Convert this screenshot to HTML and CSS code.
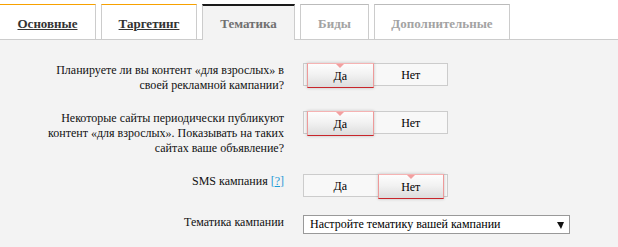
FILE: index.html
```html
<!DOCTYPE html>
<html>
<head>
<meta charset="utf-8">
<title>Кампания</title>
<link rel="stylesheet" href="styles.css">
</head>
<body>
<div class="page">
  <ul class="tabs">
    <li class="tab tab-link tab-w1"><a href="#">Основные</a></li>
    <li class="tab tab-link tab-w2"><a href="#">Таргетинг</a></li>
    <li class="tab tab-active tab-w3"><span>Тематика</span></li>
    <li class="tab tab-off tab-w4"><span>Биды</span></li>
    <li class="tab tab-off tab-w5"><span>Дополнительные</span></li>
  </ul>
  <div class="panel">
    <div class="form">
      <div class="label">Планируете ли вы контент «для взрослых» в своей рекламной кампании?</div>
      <div class="toggle">
        <span class="seg seg-active">Да</span>
        <span class="seg">Нет</span>
      </div>

      <div class="label">Некоторые сайты периодически публикуют контент «для взрослых». Показывать на таких сайтах ваше объявление?</div>
      <div class="toggle">
        <span class="seg seg-active">Да</span>
        <span class="seg">Нет</span>
      </div>

      <div class="label">SMS кампания <span class="help">[<a href="#">?</a>]</span></div>
      <div class="toggle">
        <span class="seg">Да</span>
        <span class="seg seg-active">Нет</span>
      </div>

      <div class="label">Тематика кампании</div>
      <div class="select">
        <span class="select-text">Настройте тематику вашей кампании</span>
        <span class="select-arrow"></span>
      </div>
    </div>
  </div>
</div>
</body>
</html>
```
FILE: styles.css
```css
html, body {
  margin: 0;
  padding: 0;
  background: #ffffff;
}

body {
  font-family: "Liberation Serif", "Times New Roman", serif;
  font-size: 12px;
  color: #111111;
  overflow: hidden;
}

.page {
  width: 618px;
  height: 247px;
  overflow: hidden;
}

.tabs {
  list-style: none;
  margin: 0 0 0 -1px;
  padding: 4px 0 0 0;
  display: flex;
  gap: 5px;
  border-bottom: 1px solid #cccccc;
}

.tab {
  box-sizing: border-box;
  height: 35px;
  border: 1px solid #cccccc;
  border-bottom: 0;
  background: #ffffff;
  text-align: center;
  font-size: 13px;
  font-weight: bold;
  line-height: 15px;
  padding-top: 11px;
}

.tab-link {
  border-top: 1px solid #f7a100;
}

.tab-link a {
  color: #333333;
  text-decoration: underline;
}

.tab-active {
  height: 36px;
  margin-bottom: -1px;
  border-top: 2px solid #1a1a1a;
  padding-top: 10px;
  background: #f3f3f3;
  color: #707070;
}

.tab-off {
  border-top: 1px solid #bbbbbb;
  color: #a3a3a3;
}

.tab-w1 { width: 97px; }
.tab-w2 { width: 96px; }
.tab-w3 { width: 93px; }
.tab-w4 { width: 69px; }
.tab-w5 { width: 136px; }

.panel {
  box-sizing: border-box;
  min-height: 207px;
  background: #f3f3f3;
  padding: 23px 0 0 34px;
}

.form {
  display: grid;
  grid-template-columns: 250px auto;
  column-gap: 19px;
  row-gap: 18px;
  align-items: start;
  justify-items: start;
}

.label {
  justify-self: stretch;
  text-align: right;
  line-height: 15px;
  color: #111111;
}

.help {
  color: #1d9ad6;
}

.help a {
  color: #1d9ad6;
  text-decoration: underline;
}

.toggle {
  box-sizing: border-box;
  width: 145px;
  height: 23px;
  border: 1px solid #cccccc;
  background: #f8f8f8;
  padding: 0 1px;
  display: grid;
  grid-template-columns: 1fr 1fr;
}

.seg {
  display: flex;
  align-items: center;
  justify-content: center;
  line-height: 15px;
  padding-top: 1px;
  color: #000000;
}

.seg-active {
  position: relative;
  margin: -1px 2px -3px;
  border: 1px solid #ee9a9a;
  border-top-color: #f5b3b3;
  border-bottom-color: #c8262c;
  background: linear-gradient(#fdfdfd 0%, #f2f2f2 45%, #dddddd 100%);
  box-shadow: 0 0 3px rgba(0, 0, 0, 0.22);
}

.seg-active::after {
  content: "";
  position: absolute;
  top: 0;
  left: 50%;
  margin-left: -4px;
  border-left: 4px solid transparent;
  border-right: 4px solid transparent;
  border-top: 4px solid #f2a0a0;
}

.select {
  box-sizing: border-box;
  width: 267px;
  height: 19px;
  border: 1px solid #999999;
  background: #ffffff;
  padding: 0 5px 0 6px;
  display: flex;
  align-items: center;
  justify-content: space-between;
  color: #000000;
  line-height: 15px;
}

.select-arrow {
  width: 0;
  height: 0;
  border-left: 4px solid transparent;
  border-right: 3px solid transparent;
  border-top: 7px solid #111111;
  margin-top: 1px;
}
```
